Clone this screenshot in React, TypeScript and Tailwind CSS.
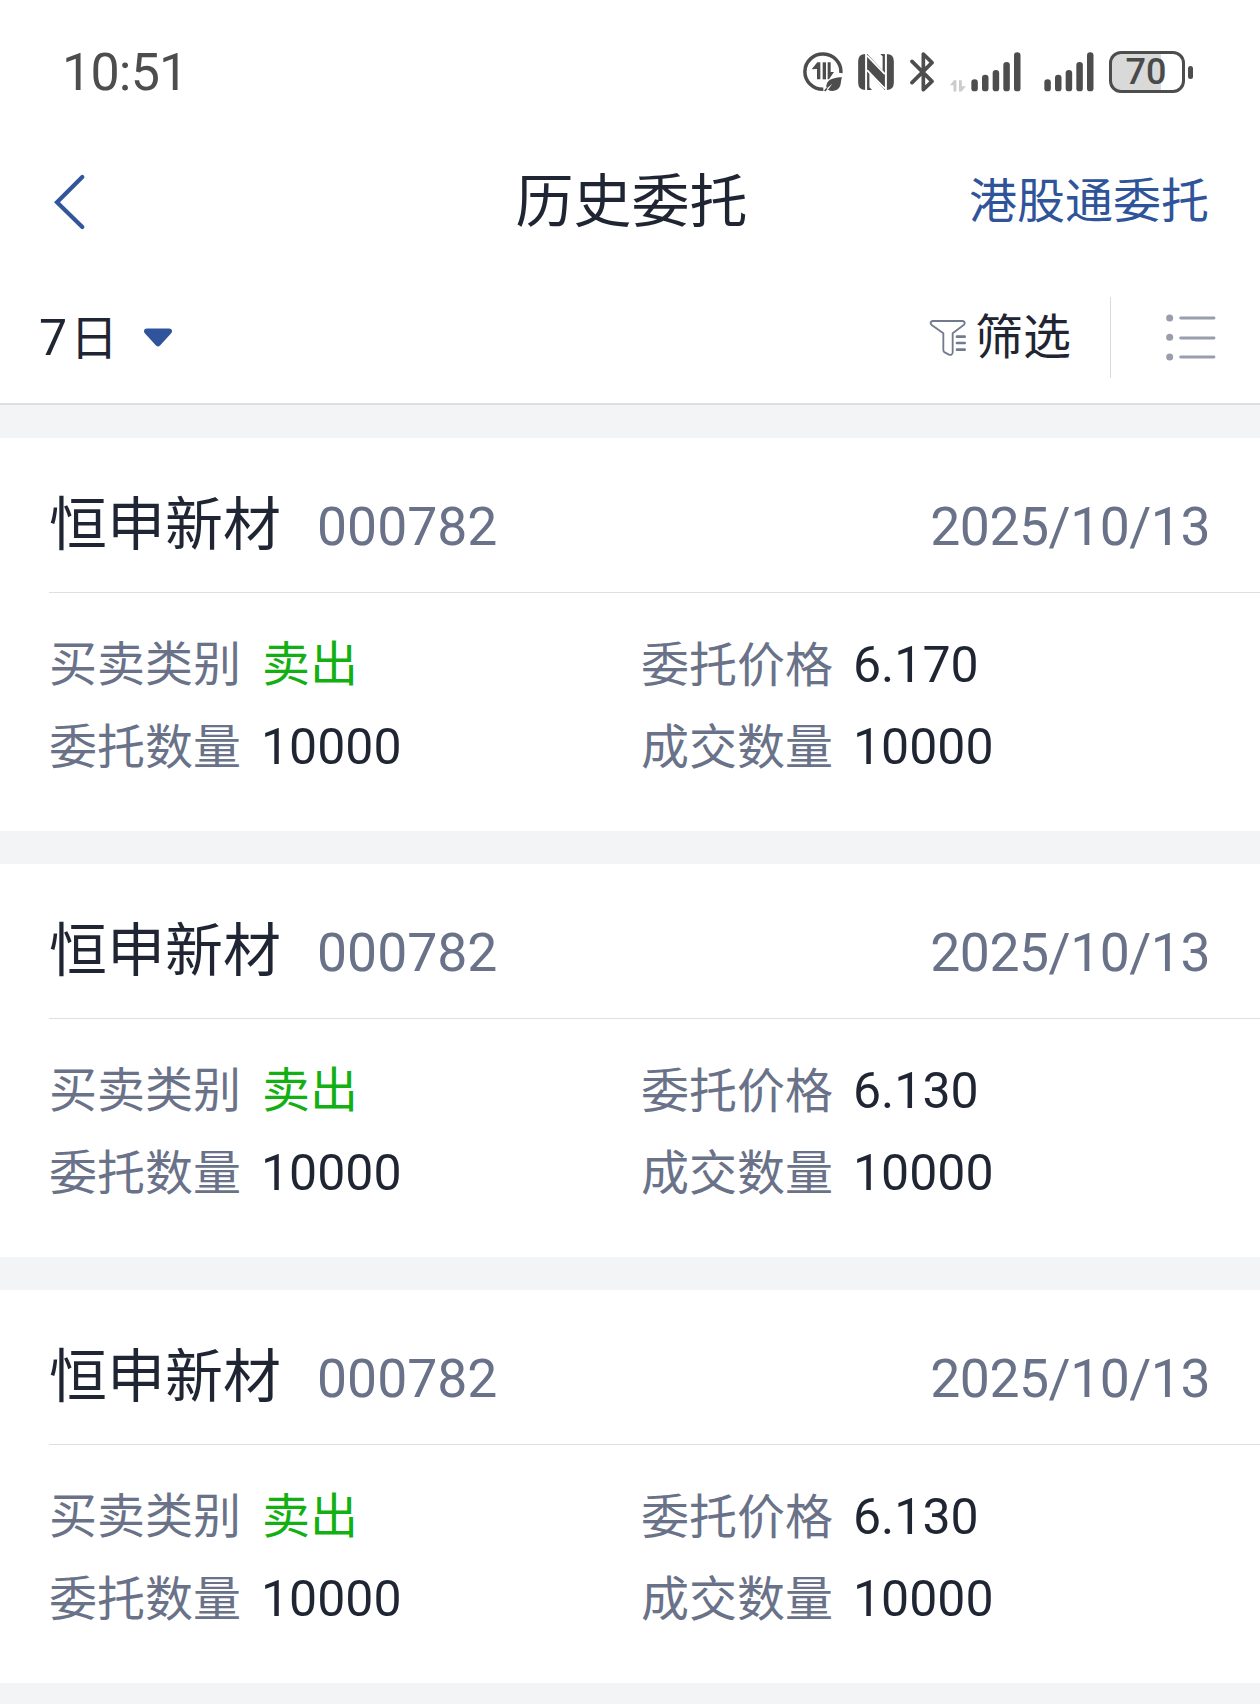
type Order = {
  name: string;
  code: string;
  date: string;
  side: string;
  price: string;
  quantity: string;
  filled: string;
};

const orders: Order[] = [
  { name: "恒申新材", code: "000782", date: "2025/10/13", side: "卖出", price: "6.170", quantity: "10000", filled: "10000" },
  { name: "恒申新材", code: "000782", date: "2025/10/13", side: "卖出", price: "6.130", quantity: "10000", filled: "10000" },
  { name: "恒申新材", code: "000782", date: "2025/10/13", side: "卖出", price: "6.130", quantity: "10000", filled: "10000" },
];

function DataSaverIcon() {
  return (
    <svg className="h-10 w-10" viewBox="38 36 120 120" fill="none">
      <path d="M151.5 99A54 53 0 1 0 99 148" stroke="#4d4d4d" strokeWidth="10.5" />
      <path d="M64 88L81 67H90V118H80V87Z" fill="#4d4d4d" />
      <path d="M97 67H107V118H97Z" fill="#4d4d4d" />
      <path d="M112 67H121V96H131L116 118H112Z" fill="#4d4d4d" />
      <path d="M155 112C132 112 113 118 109 133C107 139 108 143 110 145L126 131L113 149C125 156 143 153 149 139C153 130 151 121 155 112Z" fill="#4d4d4d" />
      <path d="M103 153L110 145" stroke="#4d4d4d" strokeWidth="5" />
    </svg>
  );
}

function NfcIcon() {
  return (
    <svg className="ml-[15px] h-9 w-9" viewBox="204 41 108 109">
      <path d="M226 41H232L278 91V48L271 41H290Q312 41 312 63V128Q312 150 290 150H284L238 98V142L246 150H226Q204 150 204 128V63Q204 41 226 41Z" fill="#4d4d4d" />
      <path d="M234 150V50L284 106V41M284 41V140" stroke="none" fill="none" />
      <path d="M228 41V150" stroke="#fff" strokeWidth="6" />
      <path d="M288 41V150" stroke="#fff" strokeWidth="6" />
      <path d="M231 46L285 102M231 90L285 146" stroke="#fff" strokeWidth="6" />
      <path d="M234 55L282 105V138L234 88Z" fill="#4d4d4d" />
    </svg>
  );
}

function BluetoothIcon() {
  return (
    <svg className="ml-4 h-10 w-6" viewBox="360 36 72 120" fill="none" stroke="#4d4d4d" strokeWidth="11" strokeLinecap="round" strokeLinejoin="round">
      <path d="M366 64L426 124L400 149V42L426 68L366 128" />
    </svg>
  );
}

function TrafficArrows() {
  return (
    <svg className="ml-4 h-3 w-4 translate-y-[14px]" viewBox="480 118 50 36" fill="#cccccc">
      <path d="M480 134L492 118H500V153H491V134Z" />
      <path d="M508 118H517V137H530L516 153H508Z" />
    </svg>
  );
}

function Signal() {
  return (
    <svg className="h-10 w-[50px]" viewBox="0 0 150 120" fill="#4d4d4d">
      <rect x="1" y="82" width="19.5" height="36" rx="9.5" />
      <rect x="33" y="68" width="19.5" height="50" rx="9.5" />
      <rect x="65" y="54" width="19.5" height="64" rx="9.5" />
      <rect x="97" y="30" width="19.5" height="88" rx="9.5" />
      <rect x="129" y="1" width="19.5" height="117" rx="9.5" />
    </svg>
  );
}

function Battery() {
  return (
    <div className="ml-[15px] flex items-center">
      <div className="flex h-[42px] w-[76px] items-center justify-center rounded-[12px] border-[3px] border-[#4d4d4d] bg-linear-to-r from-[#d9d9d9] from-70% to-white to-70% pr-0.5 text-[36px] leading-none font-medium text-[#4a4a4a]">
        70
      </div>
      <div className="ml-[3px] h-[13px] w-[5px] rounded-full bg-[#4d4d4d]" />
    </div>
  );
}

function StatusBar() {
  return (
    <div className="flex h-[146px] items-center justify-between pr-[67px] pl-[62px]">
      <div className="text-[52px] leading-none tracking-[-0.8px] text-[#4d4d4d]">10:51</div>
      <div className="flex items-center pb-[2px]">
        <DataSaverIcon />
        <NfcIcon />
        <BluetoothIcon />
        <TrafficArrows />
        <div className="ml-[5px] flex gap-[23px]">
          <Signal />
          <Signal />
        </div>
        <Battery />
      </div>
    </div>
  );
}

function NavBar() {
  return (
    <header className="grid h-[126px] grid-cols-3 items-center pr-[51px] pb-[14px] pl-[54px]">
      <svg className="h-[58px] w-8" viewBox="0 0 32 58" fill="none" stroke="#32569b" strokeWidth="4.2" strokeLinecap="round">
        <path d="M28.3 4L3 29.3L28.3 54" />
      </svg>
      <h1 className="text-center text-[58px] leading-none whitespace-nowrap">历史委托</h1>
      <a className="text-right text-[48px] leading-none whitespace-nowrap text-[#30549a]">港股通委托</a>
    </header>
  );
}

function FilterBar() {
  return (
    <div className="flex h-[133px] items-center border-b-2 border-[#dcdfe3] pr-[44px] pl-[39px]">
      <div className="text-[48px] leading-none">
        <span className="text-[50px]">7</span>
        <span className="ml-[3px]">日</span>
      </div>
      <svg className="ml-[26px] h-5 w-7" viewBox="0 0 28 20" fill="#30549c">
        <path d="M3 .5H25Q28 .5 28 3.2Q28 4.5 27 5.5L16 17.5Q14 19.7 12 17.5L1 5.5Q0 4.5 0 3.2Q0 .5 3 .5Z" />
      </svg>
      <div className="ml-auto flex items-center">
        <svg className="h-[38px] w-[38px]" viewBox="85 115 114 114" fill="none" stroke="#727b8e" strokeWidth="5.5" strokeLinecap="round" strokeLinejoin="round">
          <path d="M96 121H186Q196 124 190 132L156 158V216Q154 225 145 222L132 215Q128 213 128 208V158L92 132Q86 124 96 121Z" />
          <path d="M169 168H192M169 187H192M169 207H192" strokeWidth="8" />
        </svg>
        <span className="ml-2 text-[48px] leading-none">筛选</span>
      </div>
      <div className="ml-[39px] h-[81px] w-px bg-[#d9dbdf]" />
      <svg className="ml-[55px] h-[47px] w-[50px]" viewBox="797 102 150 141" fill="#989eab">
        <circle cx="808" cy="114" r="10.5" />
        <circle cx="808" cy="172" r="10.5" />
        <circle cx="808" cy="231" r="10.5" />
        <path d="M841 114H941M841 174H941M841 231H941" stroke="#989eab" strokeWidth="8.5" strokeLinecap="round" />
      </svg>
    </div>
  );
}

function Field({ label, value, green = false }: { label: string; value: string; green?: boolean }) {
  return (
    <div className="flex h-[82px] items-baseline leading-[82px]">
      <span className="text-[48px] text-[#697288]">{label}</span>
      {green ? (
        <span className="ml-[21px] text-[48px] text-[#13b013]">{value}</span>
      ) : (
        <span className="ml-[20px] text-[50px]">{value}</span>
      )}
    </div>
  );
}

function OrderCard({ order }: { order: Order }) {
  return (
    <section className="h-[393px] bg-white pl-[49px]">
      <div className="flex h-[155px] items-baseline border-b border-[#dddfe2] pr-[50px] leading-[174px]">
        <h2 className="text-[58px]">{order.name}</h2>
        <span className="ml-[36px] text-[53.5px] text-[#697288]">{order.code}</span>
        <span className="ml-auto text-[53.5px] tracking-[-0.5px] text-[#697288]">{order.date}</span>
      </div>
      <div className="grid grid-cols-[592px_1fr] pt-[31px]">
        <Field label="买卖类别" value={order.side} green />
        <Field label="委托价格" value={order.price} />
        <Field label="委托数量" value={order.quantity} />
        <Field label="成交数量" value={order.filled} />
      </div>
    </section>
  );
}

export default function App() {
  return (
    <main className="h-[1704px] w-[1260px] overflow-hidden bg-[#f3f4f6] font-[Roboto,'Noto_Sans_CJK_SC',sans-serif] text-[#1f2532]">
      <div className="bg-white">
        <StatusBar />
        <NavBar />
        <FilterBar />
      </div>
      <div className="flex flex-col gap-[33px] pt-[33px]">
        {orders.map((order, i) => (
          <OrderCard key={i} order={order} />
        ))}
      </div>
    </main>
  );
}
